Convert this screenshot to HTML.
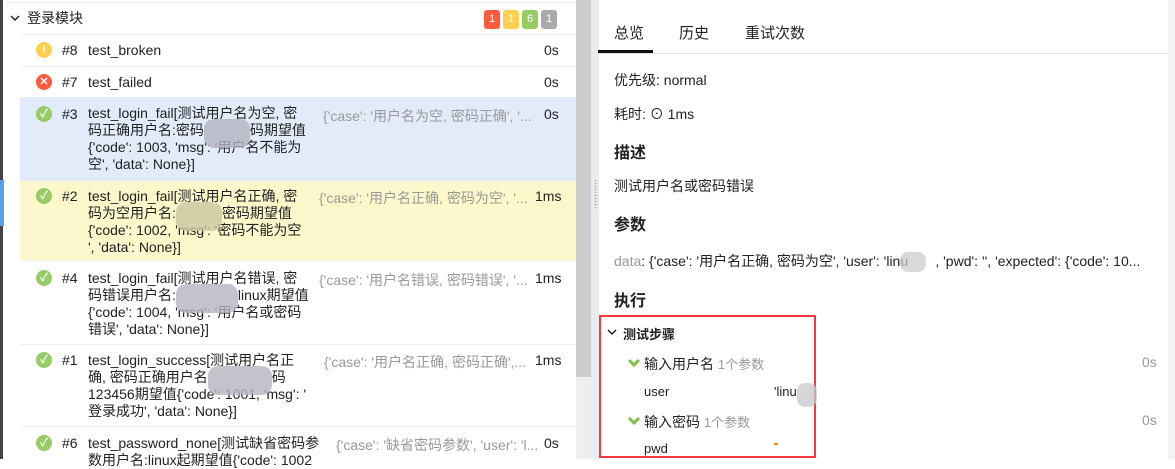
<!DOCTYPE html>
<html><head><meta charset="utf-8"><style>
*{margin:0;padding:0;box-sizing:border-box}
body{width:1175px;height:459px;overflow:hidden;background:#fff;font-family:"Liberation Sans","Noto Sans CJK SC",sans-serif;font-size:14px;color:#222;position:relative}
.a{position:absolute;white-space:nowrap}
.row{position:absolute;left:20px;width:556px;border-top:1px solid #eee}
.ic{position:absolute;left:36px;width:16px;height:16px;border-radius:50%;color:#fff;font-size:11px;font-weight:bold;text-align:center;line-height:16px}
.nm{position:absolute;left:88px;white-space:nowrap;line-height:17px}
.pr{position:absolute;color:#999;white-space:nowrap;overflow:hidden;text-overflow:ellipsis}
.badge{display:inline-block;width:16px;height:19px;border-radius:3px;color:#fff;font-size:11px;text-align:center;line-height:19px;margin-left:3px}
.bl{display:inline-block;height:17px;vertical-align:top;position:relative}
.bl i{position:absolute;left:0;right:0;top:-3px;bottom:-9px;border-radius:10px;background:#b4b4c2;opacity:.8}
.blur{position:absolute;background:#b8b8c4;border-radius:8px;opacity:.75}
h3{position:absolute;font-size:16px;font-weight:bold;left:614px}
</style></head><body>
<div class="a" style="left:0;top:0;width:3px;height:459px;background:#444"></div>
<div class="a" style="left:0;top:180px;width:4px;height:46px;background:#5aa0e8"></div>
<div class="a" style="left:6px;top:2px;width:570px;height:1px;background:#eee"></div>
<svg class="a" style="left:10px;top:14px" width="10" height="8"><polyline points="1,2 5,6 9,2" fill="none" stroke="#222" stroke-width="1.5"/></svg>
<div class="a" style="left:27px;top:8px;font-size:14px">登录模块</div>
<div class="a" style="left:481px;top:9px"><span class="badge" style="background:#fd5a3e">1</span><span class="badge" style="background:#ffd050">1</span><span class="badge" style="background:#97cc64">6</span><span class="badge" style="background:#aaa">1</span></div>

<div class="row" style="top:34px;height:32px"></div>
<div class="ic" style="top:42px;background:#ffd050">!</div><div class="a" style="left:62px;top:42px">#8</div><div class="a" style="left:88px;top:42px">test_broken</div><div class="a" style="left:544px;top:42px">0s</div>
<div class="row" style="top:66px;height:31px"></div>
<div class="ic" style="top:74px;background:#fd5a3e">✕</div><div class="a" style="left:62px;top:74px">#7</div><div class="a" style="left:88px;top:74px">test_failed</div><div class="a" style="left:544px;top:74px">0s</div>

<div class="a" style="left:20px;top:97px;width:556px;height:84px;background:#e2ebfa"></div>
<div class="a" style="left:20px;top:181px;width:556px;height:79px;background:#fdf8cc"></div>

<div class="ic" style="top:106px;background:#97cc64">✓</div><div class="a" style="left:62px;top:106px">#3</div>
<div class="nm" style="top:105px">test_login_fail[测试用户名为空, 密<br>码正确用户名:密码<span class="bl" style="width:46px"><i></i></span>码期望值<br>{'code': 1003, 'msg': '用户名不能为<br>空', 'data': None}]</div>
<div class="pr" style="left:323px;top:106px;width:215px">{'case': '用户名为空, 密码正确', '...</div><div class="a" style="left:544px;top:106px">0s</div>

<div class="ic" style="top:188px;background:#97cc64">✓</div><div class="a" style="left:62px;top:188px">#2</div>
<div class="nm" style="top:188px">test_login_fail[测试用户名正确, 密<br>码为空用户名:<span class="bl" style="width:46px"><i style="background:#c9c4a0"></i></span>密码期望值<br>{'code': 1002, 'msg': '密码不能为空<br>', 'data': None}]</div>
<div class="pr" style="left:319px;top:188px;width:214px">{'case': '用户名正确, 密码为空', '...</div><div class="a" style="left:535px;top:188px">1ms</div>

<div class="row" style="top:260px;height:84px"></div>
<div class="ic" style="top:270px;background:#97cc64">✓</div><div class="a" style="left:62px;top:270px">#4</div>
<div class="nm" style="top:270px">test_login_fail[测试用户名错误, 密<br>码错误用户名:<span class="bl" style="width:62px"><i></i></span>linux期望值<br>{'code': 1004, 'msg': '用户名或密码<br>错误', 'data': None}]</div>
<div class="pr" style="left:319px;top:270px;width:214px">{'case': '用户名错误, 密码错误', '...</div><div class="a" style="left:535px;top:270px">1ms</div>

<div class="row" style="top:344px;height:82px"></div>
<div class="ic" style="top:352px;background:#97cc64">✓</div><div class="a" style="left:62px;top:352px">#1</div>
<div class="nm" style="top:352px">test_login_success[测试用户名正<br>确, 密码正确用户名<span class="bl" style="width:64px"><i></i></span>码<br>123456期望值{'code': 1001, 'msg': '<br>登录成功', 'data': None}]</div>
<div class="pr" style="left:324px;top:352px;width:209px">{'case': '用户名正确, 密码正确',...</div><div class="a" style="left:535px;top:352px">1ms</div>

<div class="row" style="top:426px;height:40px"></div>
<div class="ic" style="top:435px;background:#97cc64">✓</div><div class="a" style="left:62px;top:435px">#6</div>
<div class="nm" style="top:435px">test_password_none[测试缺省密码参<br>数用户名:linux起期望值{'code': 1002</div>
<div class="pr" style="left:336px;top:435px;width:206px">{'case': '缺省密码参数', 'user': 'l...</div><div class="a" style="left:544px;top:435px">0s</div>

<div class="a" style="left:576px;top:0;width:15px;height:459px;background:#efefef"></div>
<div class="a" style="left:576px;top:0;width:15px;height:377px;background:#cdcdcd"></div>
<div class="a" style="left:591px;top:0;width:8px;height:459px;background:#e9edf1"></div>
<div class="a" style="left:594px;top:179px;width:4px;height:30px;background-image:radial-gradient(#bbb 1px,transparent 1px);background-size:3px 3px"></div>
<div class="a" style="left:1168px;top:0;width:7px;height:459px;background:#f3f3f3"></div>

<div class="a" style="left:614px;top:22px;font-size:15px">总览</div>
<div class="a" style="left:679px;top:22px;font-size:15px">历史</div>
<div class="a" style="left:745px;top:22px;font-size:15px">重试次数</div>
<div class="a" style="left:598px;top:53px;width:570px;height:1px;background:#e4e4e4"></div>
<div class="a" style="left:598px;top:50px;width:55px;height:3px;background:#111"></div>
<div class="a" style="left:614px;top:70px">优先级: normal</div>
<div class="a" style="left:614px;top:104px">耗时: ⊙ 1ms</div>
<h3 style="top:139px">描述</h3>
<div class="a" style="left:614px;top:176px">测试用户名或密码错误</div>
<h3 style="top:211px">参数</h3>
<div class="a" style="left:614px;top:251px"><span style="color:#999">data</span>: {'case': '用户名正确, 密码为空', 'user': 'linu&nbsp;&nbsp;&nbsp;&nbsp;&nbsp;&nbsp;&nbsp;, 'pwd': '', 'expected': {'code': 10...</div>
<div class="blur" style="left:900px;top:252px;width:26px;height:20px;background:#ccc"></div>
<h3 style="top:287px">执行</h3>
<div class="a" style="left:599px;top:315px;width:217px;height:143px;border:2px solid #f33a3a"></div>
<svg class="a" style="left:607px;top:328px" width="10" height="8"><polyline points="1,2 5,6 9,2" fill="none" stroke="#222" stroke-width="1.5"/></svg>
<div class="a" style="left:623px;top:324px;font-size:13px;font-weight:bold">测试步骤</div>
<svg class="a" style="left:628px;top:358px" width="12" height="9"><polyline points="1,2 6,7 11,2" fill="none" stroke="#7cbf4a" stroke-width="3"/></svg>
<div class="a" style="left:644px;top:354px">输入用户名 <span style="color:#999;font-size:13px">1个参数</span></div>
<div class="a" style="left:1142px;top:354px;color:#999">0s</div>
<div class="a" style="left:644px;top:384px;font-size:13px">user</div>
<div class="a" style="left:774px;top:384px;font-size:13px">'linu</div>
<div class="blur" style="left:797px;top:383px;width:20px;height:24px;background:#c8c8cc"></div>
<svg class="a" style="left:628px;top:416px" width="12" height="9"><polyline points="1,2 6,7 11,2" fill="none" stroke="#7cbf4a" stroke-width="3"/></svg>
<div class="a" style="left:644px;top:412px">输入密码 <span style="color:#999;font-size:13px">1个参数</span></div>
<div class="a" style="left:1142px;top:412px;color:#999">0s</div>
<div class="a" style="left:644px;top:441px;font-size:13px">pwd</div>
<div class="a" style="left:774px;top:443px;width:4px;height:2px;background:#e08020"></div>
</body></html>
